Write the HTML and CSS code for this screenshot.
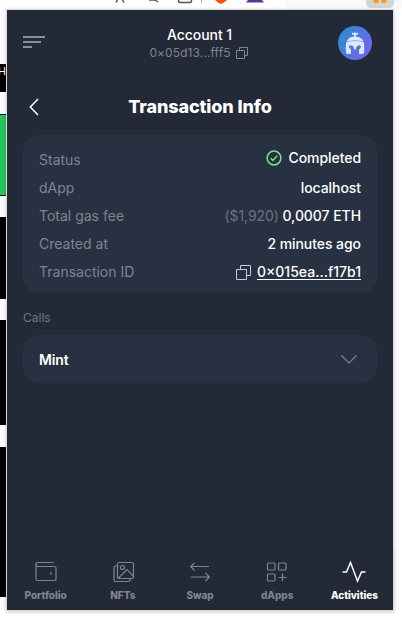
FILE: index.html
```html
<!DOCTYPE html>
<html lang="en">
<head>
<meta charset="utf-8">
<title>Transaction Info</title>
<link rel="stylesheet" href="styles.css">
</head>
<body>
<div class="toolbar">
  <svg width="402" height="10" viewBox="0 0 402 10" fill="none">
    <path d="M285 0h117v9H290q-5-2-5-9z" fill="#f9f9f9"/>
    <path d="M117.500 0L116 2.500M122.500 0L124 2.500" stroke="#444" stroke-width="1.400"/>
    <path d="M149 0h6M155 0l3 2" stroke="#555" stroke-width="1.400"/>
    <path d="M178.500 0v1q0 1.500 2 1.500h9q2 0 2-1.500V0" stroke="#555" stroke-width="1.400"/>
    <path d="M201.500 0v3" stroke="#aaa"/>
    <path d="M215 0h12l-3 2.500-3 1.500-3-1.500z" fill="#ff5000"/>
    <path d="M246 2.500L248 0h14l2 2.500z" fill="#65309a"/>
    <path d="M366 0h28v2q0 6-6 6h-16q-6 0-6-6z" fill="#d4d4d4"/>
    <path d="M373.500 0h5v3h-3q-2 0-2-3zM381.500 0h5q0 3-2 3h-3z" fill="#ff9914"/>
  </svg>
</div>
<div class="stage">
  <div class="backdrop">
    <div class="block heading">H</div>
    <div class="block green"></div>
    <div class="block first"></div>
    <div class="block second"></div>
    <div class="block third"></div>
  </div>
  <main class="popup">
    <header class="header">
      <svg class="menu" width="22" height="14" viewBox="0 0 22 14"><path d="M0 1h22v2H0zM0 6h18v2H0zM0 11h9v2H0z" fill="#88909b"/></svg>
      <div class="account">
        <div class="name">Account 1</div>
        <div class="address">0×05d13...fff5
          <svg width="12" height="12" viewBox="0 0 12 12" fill="none" stroke="#7e858f"><path d="M.5 3.500h8v8h-8zM3.500 3.500v-3h8v8h-3"/></svg>
        </div>
      </div>
      <svg class="avatar" width="34" height="34" viewBox="0 0 34 34">
        <defs><linearGradient id="sky" x1="0" y1=".2" x2="1" y2=".8"><stop stop-color="#2a8ed0"/><stop offset="1" stop-color="#7560f5"/></linearGradient></defs>
        <circle cx="17" cy="17" r="17" fill="url(#sky)"/>
        <path d="M14 6.800l2 .2q1-1.500 2 0l2-.2v1.800l-2.200.4v2h-1.600V9L14 8.600z" fill="#dce9ff"/>
        <path d="M17 10.500c4.200 0 7 2 8.200 4.800q-8.200-1.600-16.400 0c1.200-2.800 4-4.800 8.200-4.800z" fill="#dce9ff"/>
        <path d="M8.300 15.800q8.700-1.400 17.400 0l.5 3.500v6.500q0 2.200-2.200 2.200h-3v-4.200l1.800-2.300q.7-2-1-2.200c-2 0-3 .8-3.300 2L17 24.500l-1.500-3.200c-.3-1.200-1.300-2-3.300-2q-1.700.2-1 2.200l1.800 2.300V28h-3Q7.800 28 7.800 25.800v-6.500z" fill="#dce9ff"/>
      </svg>
    </header>
    <div class="title">
      <svg width="10" height="18" viewBox="0 0 10 18" fill="none" stroke="#fff" stroke-width="1.500"><path d="M9 1L1.300 9 9 17"/></svg>
      <h1>Transaction Info</h1>
    </div>
    <section class="card details">
      <div class="row"><span>Status</span><b class="status"><svg width="16" height="16" viewBox="0 0 16 16" fill="none" stroke="#72e08c" stroke-width="1.500"><circle cx="8" cy="8" r="6.900"/><path d="M4.700 8.200l2.200 2.200 4.300-4.700"/></svg>Completed</b></div>
      <div class="row"><span>dApp</span><b>localhost</b></div>
      <div class="row"><span>Total gas fee</span><b><i>($1,920)</i> 0,0007 ETH</b></div>
      <div class="row"><span>Created at</span><b>2 minutes ago</b></div>
      <div class="row"><span>Transaction ID</span><b class="hash"><svg width="15" height="15" viewBox="0 0 15 15" fill="none" stroke="#c9ccd1"><path d="M.5 4.500h10v10H.5zM4.500 4.500v-4h10v10h-4"/></svg><u>0×015ea...f17b1</u></b></div>
    </section>
    <h2>Calls</h2>
    <section class="card call"><span>Mint</span>
      <svg width="16" height="9" viewBox="0 0 16 9" fill="none" stroke="#7e858f" stroke-width="1.200"><path d="M.5.500L8 8 15.500.500"/></svg>
    </section>
    <nav class="nav">
      <div class="tab"><svg width="24" height="24" viewBox="0 0 24 24" fill="none" stroke="currentColor" stroke-width="1.200"><path d="M19.500 2.500H4Q2 2.500 2 4.500V19q0 1.500 1.500 1.500h17q1.500 0 1.500-1.500V8q0-1.500-1.500-1.500H4Q2 6.500 2 4.500"/><path d="M17 12.500v2" stroke-width="1.600"/></svg>Portfolio</div>
      <div class="tab"><svg width="24" height="24" viewBox="0 0 24 24" fill="none" stroke="currentColor" stroke-width="1.200"><rect x="6.500" y="2.500" width="16" height="16" rx="1.500"/><path d="M6.500 6H4.500Q3 6 3 7.500V20q0 1.500 1.500 1.500h13q1.500 0 1.500-1.500v-1.500M7 18.500l9-9 6.500 7"/><circle cx="11.500" cy="7.500" r="2"/></svg>NFTs</div>
      <div class="tab"><svg width="24" height="24" viewBox="0 0 24 24" fill="none" stroke="currentColor" stroke-width="1.200"><path d="M21 6.500H3M6.500 3L2.700 6.500l3.800 4M2.500 17H21M17.500 13l3.800 4-3.800 4"/></svg>Swap</div>
      <div class="tab"><svg width="24" height="24" viewBox="0 0 24 24" fill="none" stroke="currentColor" stroke-width="1.200"><rect x="2.500" y="3" width="7.500" height="7" rx="1"/><rect x="13.500" y="3" width="7.500" height="7" rx="1"/><rect x="2.500" y="14" width="7.500" height="7" rx="1"/><path d="M17.500 13.500v8M13.500 17.500h8"/></svg>dApps</div>
      <div class="tab active"><svg width="24" height="24" viewBox="0 0 24 24" fill="none" stroke="currentColor" stroke-width="1.500"><path d="M.500 12H4.500L8.500 2.500l7 18.500 4-9h4"/></svg>Activities</div>
    </nav>
  </main>
</div>
</body>
</html>
```
FILE: styles.css
```css
* { box-sizing: border-box; }
body {
  margin: 0;
  width: 402px;
  height: 626px;
  overflow: hidden;
  background: #fff;
  font: 14px/20px Inter, "Liberation Sans", sans-serif;
}
svg { display: block; flex: none; }
.toolbar { height: 10px; }
.stage { display: flex; height: 616px; }
.backdrop { width: 7px; padding-right: 1px; overflow: hidden; }
.block { background: #000; }
.heading {
  height: 28px;
  margin-top: 54px;
  color: #fff;
  font: 11px/15px "Liberation Sans", sans-serif;
  text-indent: -2px;
}
.green {
  height: 82px;
  margin-top: 22px;
  background: #22c55e;
  border: solid #000;
  border-width: 1px 0;
}
.first { height: 82px; margin-top: 21px; }
.second { height: 105px; margin-top: 21px; }
.third { height: 150px; margin-top: 22px; }
.popup {
  display: flex;
  flex-direction: column;
  width: 386px;
  height: 600px;
  background: #232937;
  box-shadow: 0 0 0 1px #dcdcd8, 0 1px 4px 1px rgba(0, 0, 0, .2);
}
.header {
  display: flex;
  justify-content: space-between;
  height: 68px;
  padding: 16px 21px 0 16px;
}
.menu { margin-top: 9px; }
.account { padding-left: 14px; text-align: center; }
.name {
  height: 18px;
  padding-left: 2px;
  line-height: 18px;
  color: #fff;
  font-weight: 500;
  letter-spacing: -.06px;
}
.address {
  display: flex;
  align-items: center;
  gap: 5px;
  height: 17px;
  color: #7e858f;
  font-size: 12px;
  letter-spacing: .1px;
}
.title {
  display: flex;
  align-items: center;
  height: 57px;
  padding: 1px 22px 0;
}
h1 {
  flex: 1;
  margin: 0 10px 0 0;
  color: #fff;
  font-size: 18px;
  font-weight: 800;
  letter-spacing: -.12px;
  text-align: center;
}
.card { margin: 0 16px; background: #283141; border-radius: 16px; }
.details { height: 158px; padding: 11px 16px 7px; }
.row {
  display: flex;
  align-items: center;
  justify-content: space-between;
  height: 28px;
  color: #7e858f;
}
.row b { color: #fff; font-weight: 500; letter-spacing: -.06px; }
.row i { color: #6b727e; font-style: normal; font-weight: 400; }
.status, .hash { display: flex; align-items: center; gap: 6px; }
.row .status { margin-bottom: 4px; }
.row .hash { letter-spacing: 0; }
u { text-underline-offset: 2px; }
h2 {
  margin: 15px 16px 7px;
  color: #6f7683;
  font-size: 12px;
  font-weight: 400;
  line-height: 20px;
}
.call {
  display: flex;
  align-items: center;
  justify-content: space-between;
  height: 48px;
  padding: 1px 20px 0 16px;
  color: #fff;
  font-weight: 600;
  letter-spacing: -.15px;
}
.nav {
  display: flex;
  height: 60px;
  margin-top: auto;
  box-shadow: 0 -2px 6px rgba(0, 0, 0, .08);
}
.tab {
  flex: 1;
  display: flex;
  flex-direction: column;
  align-items: center;
  gap: 3px;
  padding-top: 10px;
  color: #7e858f;
  font-size: 10px;
  font-weight: 800;
  letter-spacing: -.05px;
  line-height: 16px;
}
.active { color: #fff; }
```
